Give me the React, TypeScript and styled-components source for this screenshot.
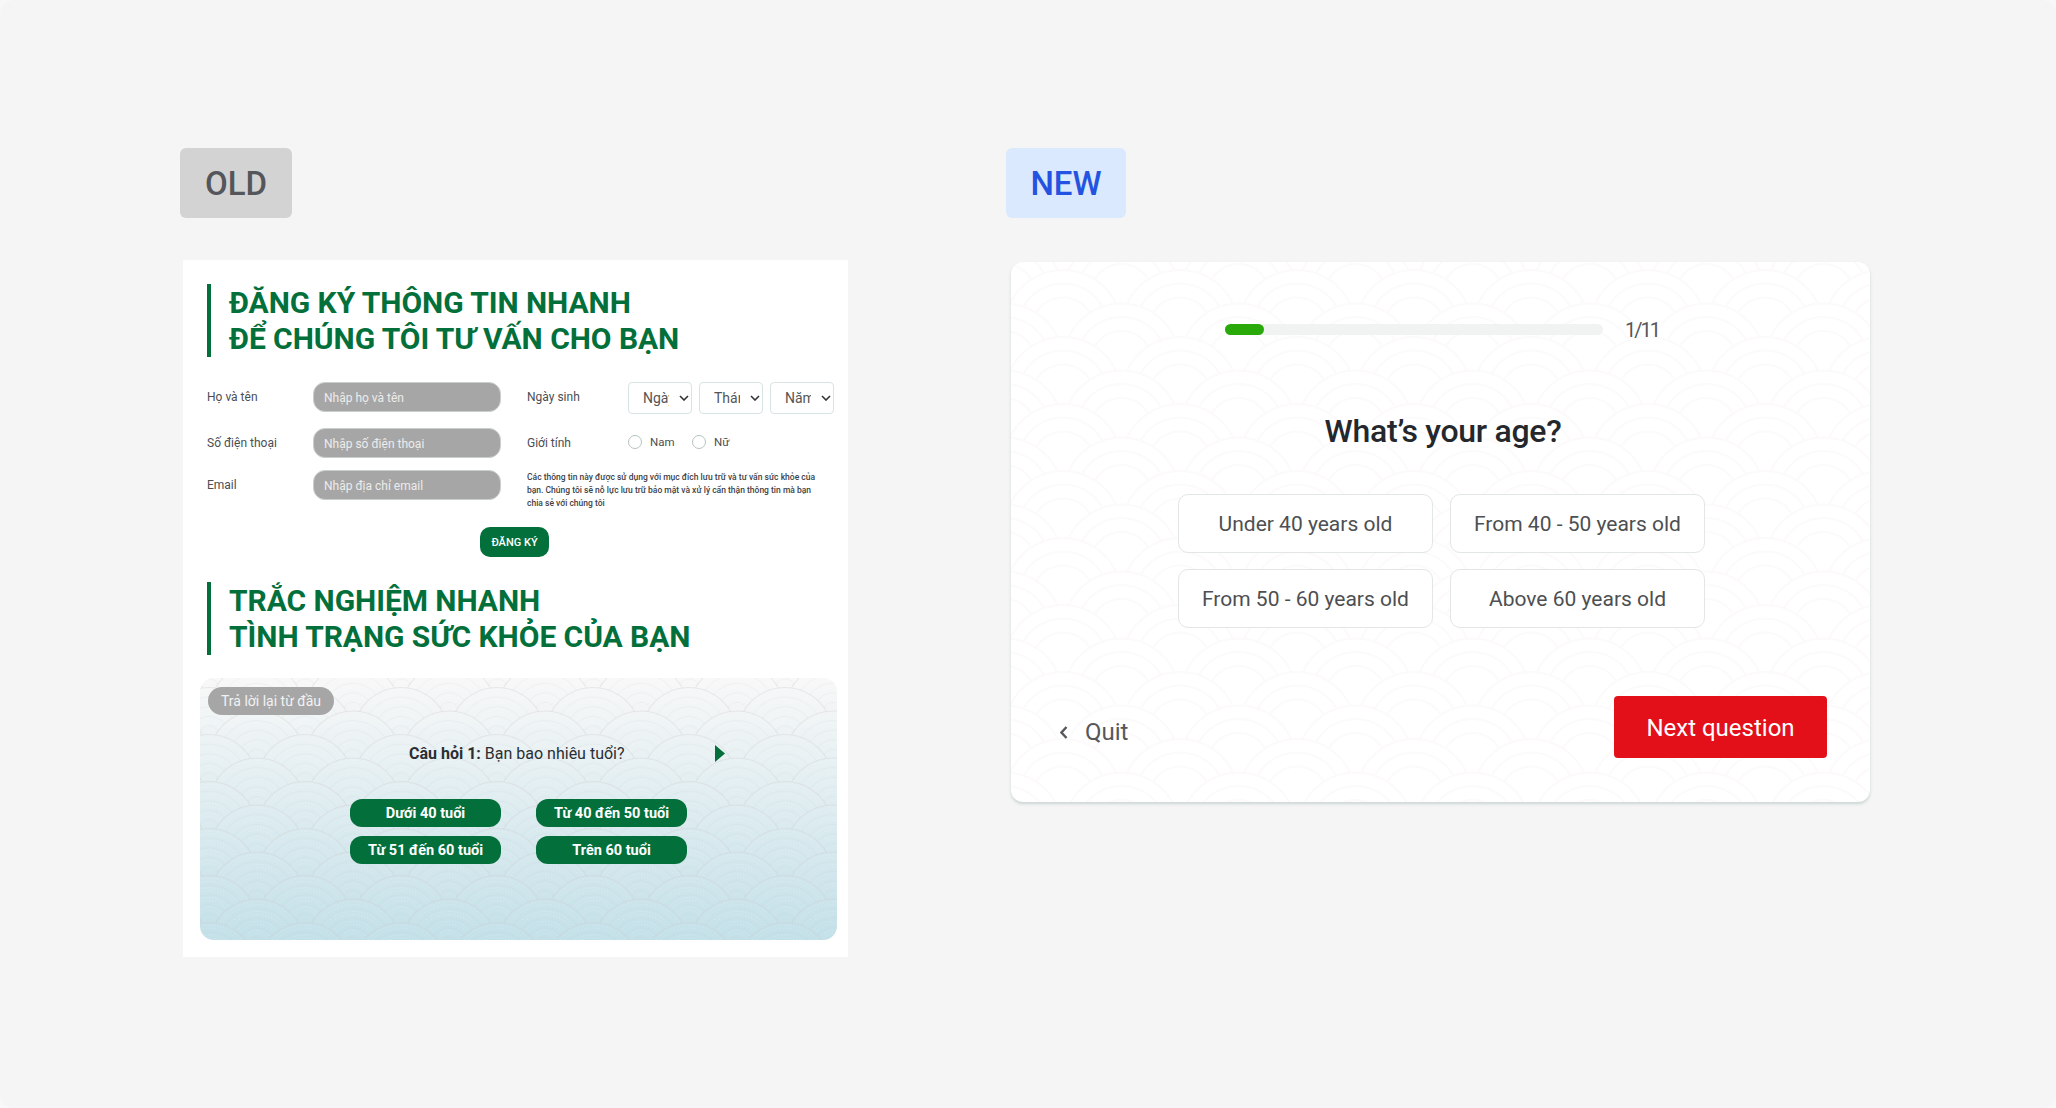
import React from 'react';
import styled, { createGlobalStyle } from 'styled-components';

// builds one tile of the fish scale pattern, only the visible arc of each ring is drawn.
// r = scale radius, s = distance between rows, an arch top sits on the tile's 0,0
const scaleTile = (r: number, s: number, rings: number[], color: string, width: number, dash?: string) => {
  const arcs: string[] = [];
  const big = Math.sqrt(r * r + s * s);
  const phi = Math.atan(s / r);
  rings.forEach((k) => {
    const p = r * k;
    const t = phi + Math.asin(Math.min(1, (p * p + s * s) / (2 * p * big)));
    const dx = p * Math.sin(t);
    const dy = p * Math.cos(t);
    for (let row = -5; row <= 2; row++) {
      const y = r + row * s;
      const xs = Math.abs(row) % 2 === 1 ? [r] : [0, 2 * r];
      xs.forEach((x) => {
        arcs.push(`M${(x - dx).toFixed(2)} ${(y - dy).toFixed(2)}A${p} ${p} 0 0 1 ${(x + dx).toFixed(2)} ${(y - dy).toFixed(2)}`);
      });
    }
  });
  const svg = `<svg xmlns="http://www.w3.org/2000/svg" width="${2 * r}" height="${2 * s}"><path d="${arcs.join('')}" fill="none" stroke="${color}" stroke-width="${width}"${dash ? ` stroke-dasharray="${dash}"` : ''}/></svg>`;
  return `url("data:image/svg+xml,${encodeURIComponent(svg)}")`;
};

const cardScales = scaleTile(58.5, 33.5, [1, 0.77, 0.53], '#fcfafb', 2);
const panelOutline = scaleTile(48, 23.5, [1], 'rgba(205,195,195,0.32)', 1.1);
const panelRings = scaleTile(48, 23.5, [0.8, 0.6, 0.4, 0.2], 'rgba(190,195,195,0.14)', 1);
const panelDots = scaleTile(48, 23.5, [0.94, 0.88, 0.74, 0.68, 0.54, 0.48, 0.34, 0.28], 'rgba(255,255,255,0.28)', 1, '1 2');

const chevronDown = `url("data:image/svg+xml,${encodeURIComponent(
  '<svg xmlns="http://www.w3.org/2000/svg" width="10" height="6"><path d="M1 1l4 4 4-4" fill="none" stroke="#333" stroke-width="1.6"/></svg>'
)}")`;

const GlobalStyle = createGlobalStyle`
  html, body {
    margin: 0;
    background: #f8f8f8;
  }
  body {
    font-family: Roboto, "Liberation Sans", sans-serif;
  }
  * {
    box-sizing: border-box;
  }
`;

const Page = styled.div`
  display: flex;
  width: 2056px;
  height: 1108px;
  padding: 148px 0 0 180px;
  border-radius: 14px;
  background: #f5f5f5;
  overflow: hidden;
`;

const Column = styled.div<{ $width: number }>`
  display: flex;
  flex-direction: column;
  align-items: flex-start;
  width: ${(p) => p.$width}px;
`;

const Badge = styled.div<{ $tone: 'old' | 'new' }>`
  display: flex;
  align-items: center;
  justify-content: center;
  width: ${(p) => (p.$tone === 'old' ? 112 : 120)}px;
  height: 70px;
  border-radius: 6px;
  font-size: 33px;
  font-weight: 500;
  background: ${(p) => (p.$tone === 'old' ? '#d3d3d3' : '#dbe9fe')};
  color: ${(p) => (p.$tone === 'old' ? '#54565b' : '#2353e0')};
`;

const OldCard = styled.div`
  width: 665px;
  height: 697px;
  margin: 42px 0 0 3px;
  padding: 24px 0 17px;
  background: #fff;
`;

const Heading = styled.h2`
  margin: 0 0 0 24px;
  padding: 1px 0 0 18px;
  border-left: 4px solid #03703c;
  height: 73px;
  color: #03703c;
  font-size: 30px;
  font-weight: 700;
  letter-spacing: -0.05px;
  line-height: 36px;
  white-space: pre-line;
`;

const FormGrid = styled.div`
  display: grid;
  grid-template-columns: 320px 1fr;
  grid-template-rows: 46px 42px 57px;
  margin: 25px 0 0 24px;
`;

const Field = styled.div`
  display: flex;
  align-items: flex-start;
`;

const FieldLabel = styled.label<{ $width: number }>`
  width: ${(p) => p.$width}px;
  flex: none;
  font-size: 12px;
  line-height: 30px;
  color: #4a4e53;
`;

const TextInput = styled.input`
  width: 188px;
  height: 30px;
  padding: 1px 10px 0;
  border: 1px solid #c9cfce;
  border-radius: 12px;
  background: #a6a6a6;
  font: 12px Roboto, sans-serif;
  &::placeholder {
    color: #ececec;
  }
`;

const DateSelects = styled.div`
  display: flex;
  gap: 7px;
`;

const DateSelect = styled.select`
  appearance: none;
  width: 64px;
  height: 32px;
  padding: 0 22px 0 14px;
  border: 1px solid #d8e3e3;
  border-radius: 4px;
  background: ${chevronDown} no-repeat right 2px center, #fff;
  color: #555;
  font: 14px Roboto, sans-serif;
`;

const RadioGroup = styled.div`
  display: flex;
  align-items: center;
  height: 28px;
`;

const Radio = styled.span`
  width: 14px;
  height: 14px;
  margin-right: 8px;
  border: 1px solid #b6c3c3;
  border-radius: 50%;
`;

const RadioText = styled.span`
  width: 42px;
  font-size: 11.5px;
  color: #4b4f53;
`;

const FinePrint = styled.p`
  width: 292px;
  margin: 0;
  padding-top: 1px;
  font-size: 8.5px;
  font-weight: 500;
  line-height: 12.8px;
  color: #3e4247;
`;

const SubmitRow = styled.div`
  display: flex;
  padding-left: 297px;
  margin-bottom: 25px;
`;

const SubmitButton = styled.button`
  width: 69px;
  height: 30px;
  padding: 0;
  border: 0;
  border-radius: 10px;
  background: #03703c;
  color: #fff;
  font: 500 11px Roboto, sans-serif;
`;

const QuizPanel = styled.div`
  width: 637px;
  height: 262px;
  margin: 23px 0 0 17px;
  padding: 9px 8px;
  border-radius: 14px;
  background-image: ${panelOutline}, ${panelRings}, ${panelDots}, linear-gradient(180deg, #f8f8f8 0%, #c3e0e8 100%);
  background-position: 57px 33px, 57px 33px, 57px 33px, 0 0;
`;

const RestartPill = styled.div`
  display: flex;
  align-items: center;
  justify-content: center;
  width: 126px;
  height: 28px;
  border-radius: 14px;
  background: #a6a6a6;
  color: #f2f2f2;
  font-size: 14px;
`;

const QuestionRow = styled.div`
  display: flex;
  align-items: center;
  height: 20px;
  margin: 28px 0 0 201px;
  font-size: 16px;
  color: #2a2e33;
  b {
    font-weight: 700;
  }
`;

const NextArrow = styled.svg`
  width: 10px;
  height: 17px;
  margin-left: 90px;
`;

const OptionGrid = styled.div`
  display: grid;
  grid-template-columns: 151px 151px;
  gap: 9px 35px;
  margin: 36px 0 0 142px;
`;

const OldOption = styled.button`
  height: 28px;
  padding: 0;
  border: 0;
  border-radius: 12px;
  background: #03703c;
  color: #fff;
  font: 700 14.5px Roboto, sans-serif;
`;

const NewCard = styled.div`
  display: flex;
  flex-direction: column;
  width: 859px;
  height: 540px;
  margin: 44px 0 0 5px;
  padding: 62px 43px 44px 48px;
  border-radius: 12px;
  background-color: #fff;
  background-image: ${cardScales};
  background-position: 52px 8px;
  box-shadow: 0 2px 3px rgba(170, 185, 185, 0.55);
`;

const ProgressRow = styled.div`
  display: flex;
  align-items: center;
  gap: 22px;
  height: 11px;
  margin-left: 166px;
`;

const Track = styled.div`
  width: 378px;
  height: 11px;
  border-radius: 6px;
  background: #f1f3f2;
`;

const TrackFill = styled.div`
  height: 100%;
  border-radius: 6px;
  background: #2aaa0a;
`;

const ProgressText = styled.span`
  font-size: 20px;
  letter-spacing: -2px;
  color: #55575a;
`;

const Question = styled.h1`
  margin: 76px 0 0;
  text-align: center;
  font-size: 32px;
  font-weight: 500;
  letter-spacing: -0.3px;
  line-height: 40px;
  color: #24272c;
`;

const AnswerGrid = styled.div`
  display: grid;
  grid-template-columns: 255px 255px;
  gap: 16px 17px;
  margin: 43px 0 0 119px;
`;

const Answer = styled.button`
  height: 59px;
  padding: 0;
  border: 1px solid #e2e6e6;
  border-radius: 10px;
  background: #fff;
  color: #4d4f52;
  font: 400 21px Roboto, sans-serif;
`;

const Footer = styled.div`
  display: flex;
  align-items: flex-start;
  justify-content: space-between;
  margin-top: 68px;
`;

const QuitLink = styled.a`
  display: flex;
  align-items: center;
  gap: 17px;
  margin: 20px 0 0 1px;
  font-size: 24px;
  line-height: 32px;
  color: #55575a;
`;

const NextButton = styled.button`
  width: 213px;
  height: 62px;
  padding: 2px 0 0;
  border: 0;
  border-radius: 4px;
  background: #e3101a;
  color: #fff;
  font: 400 24px Roboto, sans-serif;
`;

const ageOptions = ['Under 40 years old', 'From 40 - 50 years old', 'From 50 - 60 years old', 'Above 60 years old'];
const oldOptions = ['Dưới 40 tuổi', 'Từ 40 đến 50 tuổi', 'Từ 51 đến 60 tuổi', 'Trên 60 tuổi'];

export default function App() {
  return (
    <Page>
      <GlobalStyle />
      <Column $width={826}>
        <Badge $tone="old">OLD</Badge>
        <OldCard>
          <Heading>{'ĐĂNG KÝ THÔNG TIN NHANH\nĐỂ CHÚNG TÔI TƯ VẤN CHO BẠN'}</Heading>
          <FormGrid>
            <Field>
              <FieldLabel $width={106}>Họ và tên</FieldLabel>
              <TextInput placeholder="Nhập họ và tên" />
            </Field>
            <Field>
              <FieldLabel $width={101}>Ngày sinh</FieldLabel>
              <DateSelects>
                <DateSelect><option>Ngày</option></DateSelect>
                <DateSelect><option>Tháng</option></DateSelect>
                <DateSelect><option>Năm</option></DateSelect>
              </DateSelects>
            </Field>
            <Field>
              <FieldLabel $width={106}>Số điện thoại</FieldLabel>
              <TextInput placeholder="Nhập số điện thoại" />
            </Field>
            <Field>
              <FieldLabel $width={101}>Giới tính</FieldLabel>
              <RadioGroup>
                <Radio />
                <RadioText>Nam</RadioText>
                <Radio />
                <RadioText>Nữ</RadioText>
              </RadioGroup>
            </Field>
            <Field>
              <FieldLabel $width={106}>Email</FieldLabel>
              <TextInput placeholder="Nhập địa chỉ email" />
            </Field>
            <FinePrint>
              Các thông tin này được sử dụng với mục đích lưu trữ và tư vấn sức khỏe của bạn. Chúng tôi sẽ nỗ lực lưu trữ bảo mật và xử lý cẩn thận thông tin mà bạn chia sẻ với chúng tôi
            </FinePrint>
          </FormGrid>
          <SubmitRow>
            <SubmitButton>ĐĂNG KÝ</SubmitButton>
          </SubmitRow>
          <Heading>{'TRẮC NGHIỆM NHANH\nTÌNH TRẠNG SỨC KHỎE CỦA BẠN'}</Heading>
          <QuizPanel>
            <RestartPill>Trả lời lại từ đầu</RestartPill>
            <QuestionRow>
              <span><b>Câu hỏi 1:</b> Bạn bao nhiêu tuổi?</span>
              <NextArrow viewBox="0 0 10 17"><path d="M0 0 L10 8.5 L0 17 Z" fill="#03703c" /></NextArrow>
            </QuestionRow>
            <OptionGrid>
              {oldOptions.map((label) => (
                <OldOption key={label}>{label}</OldOption>
              ))}
            </OptionGrid>
          </QuizPanel>
        </OldCard>
      </Column>
      <Column $width={870}>
        <Badge $tone="new">NEW</Badge>
        <NewCard>
          <ProgressRow>
            <Track>
              <TrackFill style={{ width: `${(1 / 11) * 113}%` }} />
            </Track>
            <ProgressText>1/11</ProgressText>
          </ProgressRow>
          <Question>What’s your age?</Question>
          <AnswerGrid>
            {ageOptions.map((label) => (
              <Answer key={label}>{label}</Answer>
            ))}
          </AnswerGrid>
          <Footer>
            <QuitLink>
              <svg width="8" height="13" viewBox="0 0 8 13"><path d="M6.5 1 L1.5 6.5 L6.5 12" fill="none" stroke="#55575a" strokeWidth="2.4" /></svg>
              Quit
            </QuitLink>
            <NextButton>Next question</NextButton>
          </Footer>
        </NewCard>
      </Column>
    </Page>
  );
}
